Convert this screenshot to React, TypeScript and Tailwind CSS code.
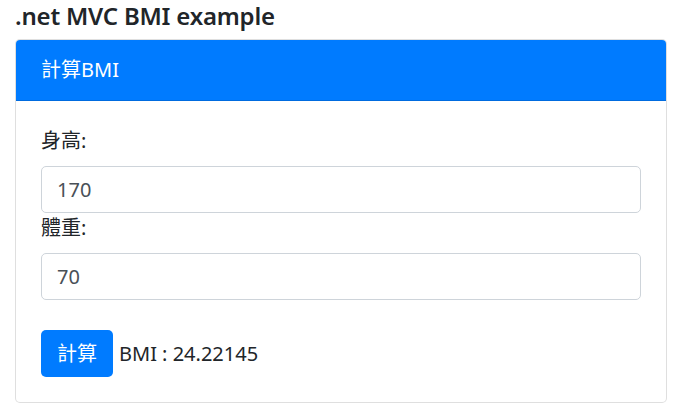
const font = {
    fontFamily: '"Segoe UI", "Noto Sans", "Noto Sans CJK TC", sans-serif',
};

export default function App() {
    return (
        <div className="min-h-[415px] bg-white text-[#212529]" style={font}>
            <div className="pl-[15px] pr-[22px]">
                <h4 className="text-[24px] font-semibold leading-[32px] tracking-[-0.2px] mb-[7px]">.net MVC BMI example</h4>

                <div className="rounded-[5px] border border-black/[0.125] bg-white">
                    <div className="rounded-t-[4px] border-b border-black/[0.125] bg-[#007bff] px-[25px] py-[15px] text-[20px] leading-[30px] text-white">
                        計算BMI
                    </div>

                    <div className="p-[25px] text-[20px] leading-[30px]">
                        <label className="mb-[10px] block">身高:</label>
                        <input
                            type="text"
                            defaultValue="170"
                            className="block h-[47px] w-full rounded-[5px] border border-[#ced4da] px-[15px] text-[20px] text-[#495057] outline-none"
                        />
                        <label className="mb-[10px] block">體重:</label>
                        <input
                            type="text"
                            defaultValue="70"
                            className="block h-[47px] w-full rounded-[5px] border border-[#ced4da] px-[15px] text-[20px] text-[#495057] outline-none"
                        />

                        <div className="mt-[30px] flex items-center">
                            <button className="h-[47px] rounded-[5px] bg-[#007bff] px-[16px] text-[20px] text-white">
                                計算
                            </button>
                            <span className="ml-[6px]">BMI : 24.22145</span>
                        </div>
                    </div>
                </div>
            </div>
        </div>
    );
}
